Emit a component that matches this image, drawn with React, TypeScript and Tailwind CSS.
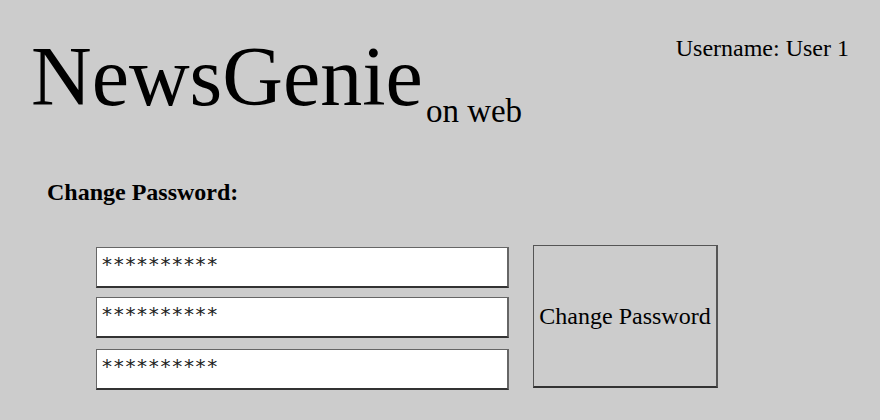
export default function App() {
  const pw = "**********";
  return (
    <div
      className="w-[880px] h-[420px] bg-[#cccccc] text-black overflow-hidden"
      style={{ fontFamily: '"Liberation Serif", "Times New Roman", serif' }}
    >
      <header className="flex justify-between items-start pl-[31px] pr-[31px] pt-[34px] h-[146px]">
        <div className="mt-[1px] h-[84px] whitespace-nowrap">
          <span className="text-[84px] leading-[84px]">NewsGenie</span>
          <span className="text-[33px] leading-[32px] align-[-17px] ml-[3px]">on web</span>
        </div>
        <div className="text-[24px] leading-[28px]">Username: User 1</div>
      </header>
      <section className="pl-[47px]">
        <h2 className="font-bold text-[24px] leading-[28px] mt-[32px]">Change Password:</h2>
        <div className="flex items-start gap-[24px] ml-[49px] mt-[39px]">
          <div className="flex flex-col w-[413px] mt-[2px]">
            {[0, 1, 2].map((i) => (
              <div
                key={i}
                className={`h-[41px] bg-white border border-[#666666] border-r-2 border-b-2 border-b-[#333333] pl-[5px] pt-[4px] text-[20px] leading-[24px] tracking-[1.7px] text-[#222222] ${
                  i === 1 ? "mt-[9px]" : i === 2 ? "mt-[11px]" : ""
                }`}
                style={{ fontFamily: '"DejaVu Sans", sans-serif' }}
              >
                {pw}
              </div>
            ))}
          </div>
          <button className="w-[185px] h-[143px] border border-[#555555] border-r-2 border-b-2 border-b-[#333333] flex items-center justify-center text-[24px] leading-[28px] bg-transparent">
            Change Password
          </button>
        </div>
      </section>
    </div>
  );
}
